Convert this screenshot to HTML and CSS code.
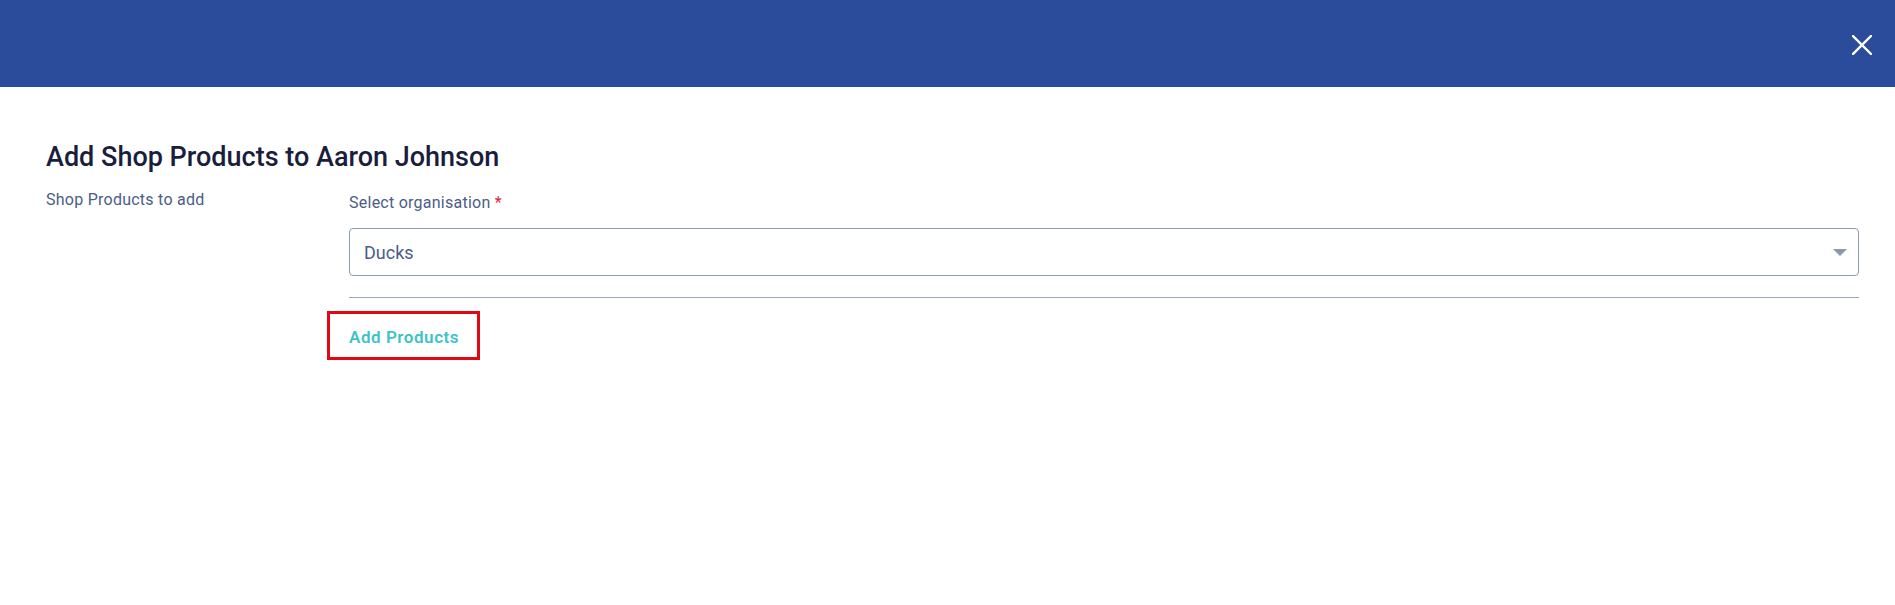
FILE: index.html
```html
<!DOCTYPE html>
<html>

<head>
  <title>Add Shop Products</title>
  <meta charset="UTF-8">
  <link rel="stylesheet" href="styles.css">
</head>

<body>
  <div class="topBar">
    <button class="closeBtn" aria-label="Close">
      <svg width="20" height="20" viewBox="0 0 20 20">
        <path d="M1 1 L19 19 M19 1 L1 19" stroke="#ffffff" stroke-width="2.4" stroke-linecap="square" fill="none"/>
      </svg>
    </button>
  </div>
  <div class="content">
    <h1 class="pageTitle">Add Shop Products to Aaron Johnson</h1>
    <div class="formRow">
      <div class="rowLabel">Shop Products to add</div>
      <div class="rowFields">
        <label class="fieldLabel" for="organisation">Select organisation <span class="required">*</span></label>
        <div class="selectBox" id="organisation">
          <span class="selectValue">Ducks</span>
          <span class="selectArrow"></span>
        </div>
        <div class="divider"></div>
        <button class="addBtn">Add Products</button>
      </div>
    </div>
  </div>
</body>

</html>
```

FILE: styles.css
```css
body {
  margin: 0;
  font-family: Roboto, "Liberation Sans", sans-serif;
  background-color: #ffffff;
}
.topBar {
  height: 87px;
  background-color: #2b4b9b;
  display: flex;
  justify-content: flex-end;
  align-items: center;
  padding-right: 23px;
}
.closeBtn {
  background: none;
  border: none;
  padding: 0;
  width: 20px;
  height: 20px;
  margin-top: 2px;
  cursor: pointer;
}
.closeBtn svg {
  display: block;
}
.content {
  padding: 0 36px 0 46px;
}
.pageTitle {
  margin: 54px 0 0 0;
  font-size: 27px;
  line-height: 32px;
  font-weight: 500;
  color: #1a1e3c;
}
.formRow {
  display: grid;
  grid-template-columns: 303px 1fr;
  margin-top: 17px;
}
.rowLabel {
  font-size: 16px;
  line-height: 20px;
  letter-spacing: 0.25px;
  color: #4b5d87;
}
.rowFields {
  display: flex;
  flex-direction: column;
  align-items: flex-start;
}
.fieldLabel {
  font-size: 16px;
  line-height: 20px;
  letter-spacing: 0.25px;
  color: #4b5d87;
  padding-top: 3px;
}
.required {
  color: #e0263d;
}
.selectBox {
  box-sizing: border-box;
  width: 100%;
  height: 48px;
  margin-top: 15px;
  border: 1px solid #8c9bb0;
  border-radius: 4px;
  display: flex;
  align-items: center;
  justify-content: space-between;
  padding: 0 11px 0 14px;
}
.selectValue {
  font-size: 18px;
  color: #4b5d87;
}
.selectArrow {
  width: 0;
  height: 0;
  border-left: 7px solid transparent;
  border-right: 7px solid transparent;
  border-top: 7px solid #8a97ab;
}
.divider {
  width: 100%;
  height: 1px;
  background-color: #9aa6b8;
  margin-top: 21px;
}
.addBtn {
  margin: 13px 0 0 -22px;
  padding: 13px 18px 10px 19px;
  border: 3px solid #e30613;
  background: #ffffff;
  font-family: Roboto, "Liberation Sans", sans-serif;
  font-size: 17px;
  line-height: 20px;
  font-weight: 600;
  letter-spacing: 0.55px;
  color: #3ec3c4;
  cursor: pointer;
}
```
